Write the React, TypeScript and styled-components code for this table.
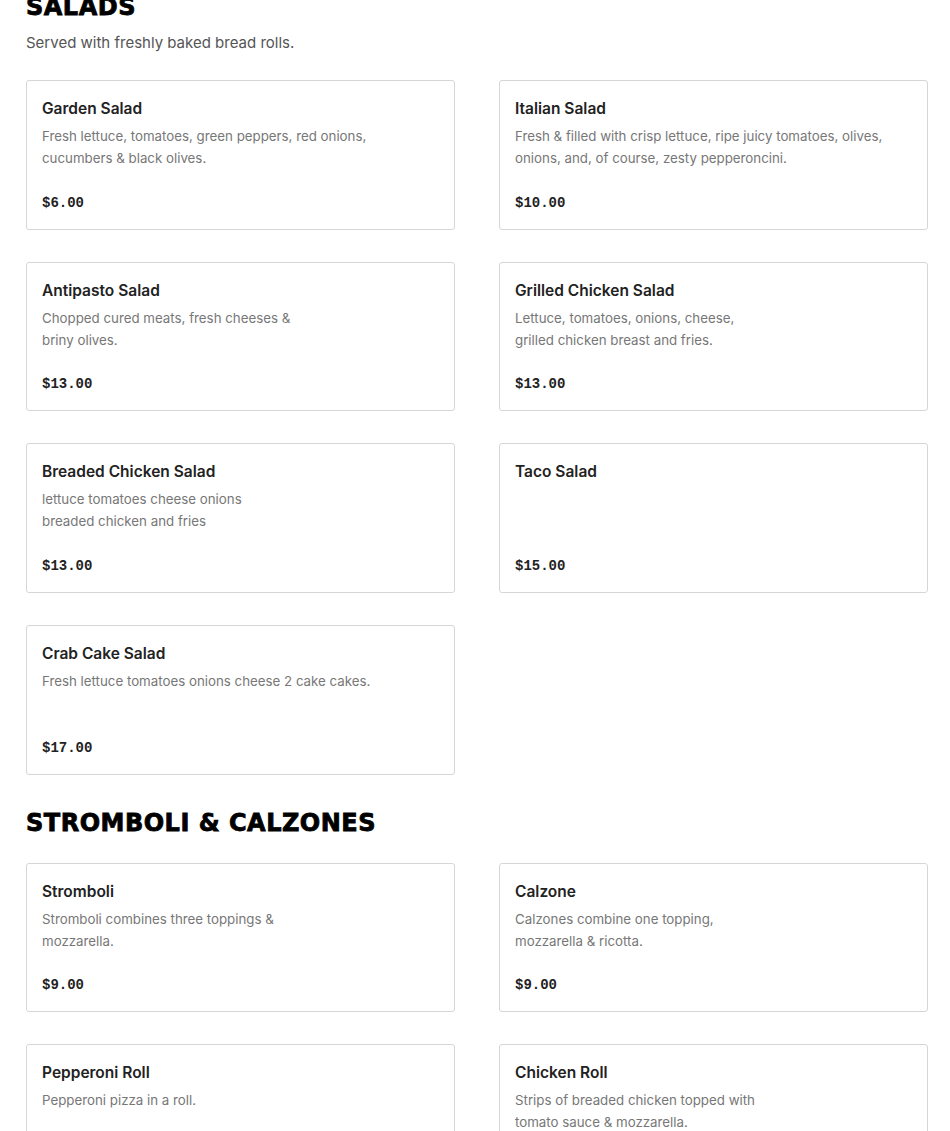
import * as React from "react";
import styled, { createGlobalStyle } from "styled-components";

interface Item {
  name: string;
  desc?: string[];
  price: string;
}

interface Section {
  title: string;
  note?: string;
  items: Item[];
}

const menu: Section[] = [
  {
    title: "SALADS",
    note: "Served with freshly baked bread rolls.",
    items: [
      {
        name: "Garden Salad",
        desc: ["Fresh lettuce, tomatoes, green peppers, red onions,", "cucumbers & black olives."],
        price: "$6.00",
      },
      {
        name: "Italian Salad",
        desc: ["Fresh & filled with crisp lettuce, ripe juicy tomatoes, olives,", "onions, and, of course, zesty pepperoncini."],
        price: "$10.00",
      },
      {
        name: "Antipasto Salad",
        desc: ["Chopped cured meats, fresh cheeses &", "briny olives."],
        price: "$13.00",
      },
      {
        name: "Grilled Chicken Salad",
        desc: ["Lettuce, tomatoes, onions, cheese,", "grilled chicken breast and fries."],
        price: "$13.00",
      },
      {
        name: "Breaded Chicken Salad",
        desc: ["lettuce tomatoes cheese onions", "breaded chicken and fries"],
        price: "$13.00",
      },
      { name: "Taco Salad", price: "$15.00" },
      {
        name: "Crab Cake Salad",
        desc: ["Fresh lettuce tomatoes onions cheese 2 cake cakes."],
        price: "$17.00",
      },
    ],
  },
  {
    title: "STROMBOLI & CALZONES",
    items: [
      {
        name: "Stromboli",
        desc: ["Stromboli combines three toppings &", "mozzarella."],
        price: "$9.00",
      },
      {
        name: "Calzone",
        desc: ["Calzones combine one topping,", "mozzarella & ricotta."],
        price: "$9.00",
      },
      { name: "Pepperoni Roll", desc: ["Pepperoni pizza in a roll."], price: "$9.00" },
      {
        name: "Chicken Roll",
        desc: ["Strips of breaded chicken topped with", "tomato sauce & mozzarella."],
        price: "$9.00",
      },
    ],
  },
];

const GlobalStyle = createGlobalStyle`
  body {
    margin: 0;
    background: #fff;
    font-family: Inter, "Liberation Sans", sans-serif;
    overflow: hidden;
  }
`;

const Page = styled.div`
  width: 902px;
  padding: 0 22px 0 26px;
  margin-top: -9px;
  display: flex;
  flex-direction: column;
  gap: 32px;
`;

const Block = styled.section`
  display: flex;
  flex-direction: column;
`;

const Heading = styled.h2`
  margin: 0;
  font-family: "DejaVu Sans", sans-serif;
  font-weight: 700;
  font-size: 24px;
  line-height: 32px;
  letter-spacing: 0.5px;
  color: #000;
  -webkit-text-stroke: 0.8px #000;
`;

const Note = styled.p`
  margin: 9px 0 2px;
  font-size: 15px;
  line-height: 22px;
  color: #555;
`;

const Grid = styled.div`
  margin-top: 24px;
  display: grid;
  grid-template-columns: 1fr 1fr;
  column-gap: 44px;
  row-gap: 32px;
`;

const Card = styled.div`
  border: 1px solid #d6d6d6;
  border-radius: 3px;
  padding: 17px 15px 15px;
  display: flex;
  flex-direction: column;
`;

const Name = styled.div`
  font-size: 15.5px;
  font-weight: 600;
  line-height: 22px;
  color: #222;
`;

const Desc = styled.div`
  margin-top: 5px;
  min-height: 44px;
  font-size: 13.3px;
  line-height: 22px;
  color: #777;
`;

const Price = styled.div`
  margin-top: 22.67px;
  font-family: "Liberation Mono", monospace;
  font-weight: 700;
  font-size: 14px;
  line-height: 22px;
  color: #222;
`;

export default function App() {
  return (
    <>
      <GlobalStyle />
      <Page>
        {menu.map(section => (
          <Block key={section.title}>
            <Heading>{section.title}</Heading>
            {section.note && <Note>{section.note}</Note>}
            <Grid>
              {section.items.map(item => (
                <Card key={item.name}>
                  <Name>{item.name}</Name>
                  <Desc>
                    {(item.desc || []).map((line, i) => (
                      <div key={i}>{line}</div>
                    ))}
                  </Desc>
                  <Price>{item.price}</Price>
                </Card>
              ))}
            </Grid>
          </Block>
        ))}
      </Page>
    </>
  );
}
